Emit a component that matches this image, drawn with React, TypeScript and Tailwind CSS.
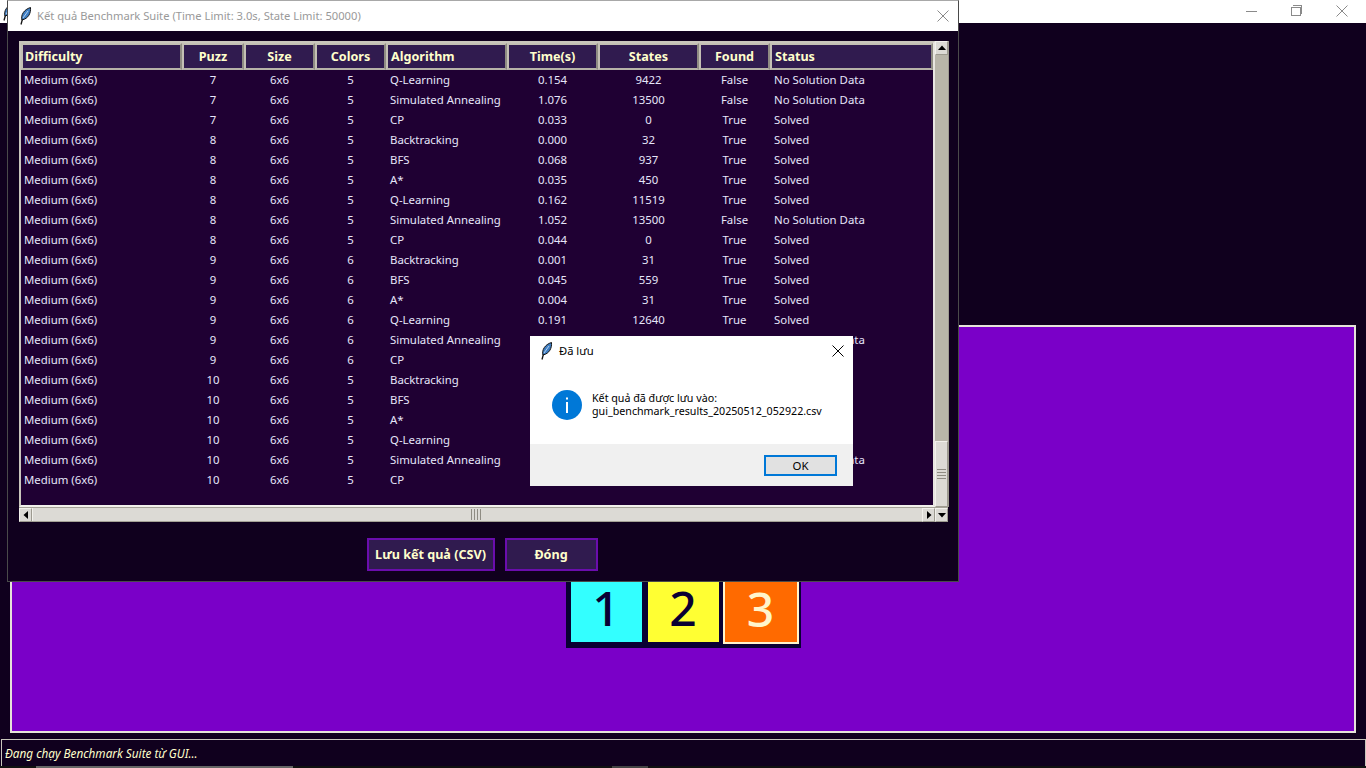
import React from 'react';

// cells the dialog covers in the reference are left empty
const rows = [
  ['7', '5', 'Q-Learning', '0.154', '9422', 'False', 'No Solution Data'],
  ['7', '5', 'Simulated Annealing', '1.076', '13500', 'False', 'No Solution Data'],
  ['7', '5', 'CP', '0.033', '0', 'True', 'Solved'],
  ['8', '5', 'Backtracking', '0.000', '32', 'True', 'Solved'],
  ['8', '5', 'BFS', '0.068', '937', 'True', 'Solved'],
  ['8', '5', 'A*', '0.035', '450', 'True', 'Solved'],
  ['8', '5', 'Q-Learning', '0.162', '11519', 'True', 'Solved'],
  ['8', '5', 'Simulated Annealing', '1.052', '13500', 'False', 'No Solution Data'],
  ['8', '5', 'CP', '0.044', '0', 'True', 'Solved'],
  ['9', '6', 'Backtracking', '0.001', '31', 'True', 'Solved'],
  ['9', '6', 'BFS', '0.045', '559', 'True', 'Solved'],
  ['9', '6', 'A*', '0.004', '31', 'True', 'Solved'],
  ['9', '6', 'Q-Learning', '0.191', '12640', 'True', 'Solved'],
  ['9', '6', 'Simulated Annealing', '', '13500', '', 'No Solution Data'],
  ['9', '6', 'CP', '', '', '', ''],
  ['10', '5', 'Backtracking', '', '', '', ''],
  ['10', '5', 'BFS', '', '', '', ''],
  ['10', '5', 'A*', '', '', '', ''],
  ['10', '5', 'Q-Learning', '', '', '', ''],
  ['10', '5', 'Simulated Annealing', '', '', '', 'No Solution Data'],
  ['10', '5', 'CP', '', '', '', ''],
];

const headers = [
  { name: 'Difficulty', pad: 'justify-start pl-[2px]' },
  { name: 'Puzz', pad: 'justify-center' },
  { name: 'Size', pad: 'justify-center' },
  { name: 'Colors', pad: 'justify-center' },
  { name: 'Algorithm', pad: 'justify-start pl-[3px]' },
  { name: 'Time(s)', pad: 'justify-center' },
  { name: 'States', pad: 'justify-center' },
  { name: 'Found', pad: 'justify-center' },
  { name: 'Status', pad: 'justify-start pl-[3px]' },
];

const Feather = () => {
  return (
    <svg width="16" height="18" viewBox="0 0 16 18" className="shrink-0">
      <path d="M3 17.5 L4.5 12" stroke="#111" strokeWidth="1.3" fill="none" />
      <path d="M4 13 C2.5 8 6 2.5 12.5 0.5 C13 6 10.5 11.5 4 13 Z" fill="#3f7fc4" stroke="#111" strokeWidth="1" />
      <path d="M5 11 L10 4" stroke="#cfe3f7" strokeWidth="0.8" fill="none" />
    </svg>
  );
};

const CloseIcon = (props: any) => {
  return (
    <svg width="12" height="12" viewBox="0 0 12 12">
      <path d="M0.5 0.5 L11.5 11.5 M11.5 0.5 L0.5 11.5" stroke={props.color} strokeWidth="1" fill="none" />
    </svg>
  );
};

const Arrow = (props: any) => {
  const points: any = {
    up: '1,7 9,7 5,2.5',
    down: '1,3 9,3 5,7.5',
    left: '7,1 7,9 2.5,5',
    right: '3,1 3,9 7.5,5',
  };
  return (
    <svg width="10" height="10" viewBox="0 0 10 10">
      <polygon points={points[props.dir]} fill="#000" />
    </svg>
  );
};

const ScrollButton = (props: any) => {
  return (
    <div className="flex h-[14px] w-[13px] shrink-0 items-center justify-center border border-[#f2f1ec] border-r-[#9d9a90] border-b-[#9d9a90] bg-[#dcdad5]">
      <Arrow dir={props.dir} />
    </div>
  );
};

const Tree = () => {
  return (
    <div className="h-[466px] w-[916px] border-2 border-[#c9c6bc] border-r-[#e8e6e0] border-b-[#f2f1ec] bg-[#1f0033]">
      <div className="grid grid-cols-[161px_62px_71px_71px_121px_91px_101px_71px_163px]">
        {headers.map((h) => {
          return (
            <div
              key={h.name}
              className={`flex h-[27px] items-center border-2 border-[#c4c0b5] border-r-[#8f8c83] border-b-[#b6b3a8] bg-[#301b4f] pt-[2px] text-[12.6px] font-bold text-[#ffffcc] ${h.pad}`}
            >
              {h.name}
            </div>
          );
        })}
      </div>
      {rows.map((r, i) => {
        return (
          <div
            key={i}
            className="grid h-5 grid-cols-[161px_62px_71px_71px_121px_91px_101px_71px_163px] items-center text-[11.4px] text-[#e6e6fa]"
          >
            <span className="pl-[3px]">Medium (6x6)</span>
            <span className="text-center">{r[0]}</span>
            <span className="text-center">6x6</span>
            <span className="text-center">{r[1]}</span>
            <span className="pl-[4px]">{r[2]}</span>
            <span className="text-center">{r[3]}</span>
            <span className="text-center">{r[4]}</span>
            <span className="text-center">{r[5]}</span>
            <span className="pl-[4px]">{r[6]}</span>
          </div>
        );
      })}
    </div>
  );
};

const VerticalScroll = () => {
  return (
    <div className="flex h-[466px] w-[14px] flex-col border-r border-[#9d9a90] bg-[#b8b5a9]">
      <ScrollButton dir="up" />
      <div className="flex-1" />
      <div className="flex h-[66px] w-[13px] flex-col items-center justify-center gap-[2px] border border-[#f2f1ec] border-r-[#9d9a90] border-b-[#9d9a90] bg-[#dcdad5]">
        <div className="h-px w-[9px] bg-[#8f8c83]" />
        <div className="h-px w-[9px] bg-[#8f8c83]" />
        <div className="h-px w-[9px] bg-[#8f8c83]" />
        <div className="h-px w-[9px] bg-[#8f8c83]" />
      </div>
    </div>
  );
};

const HorizontalScroll = () => {
  return (
    <div className="flex h-[15px] w-[929px] items-stretch border-t border-b border-[#a5a297] bg-[#dcdad5]">
      <ScrollButton dir="left" />
      <div className="flex flex-1 items-center justify-center gap-[2px] border-l border-[#f2f1ec] pr-[4px]">
        <div className="h-[11px] w-px bg-[#8f8c83]" />
        <div className="h-[11px] w-px bg-[#8f8c83]" />
        <div className="h-[11px] w-px bg-[#8f8c83]" />
        <div className="h-[11px] w-px bg-[#8f8c83]" />
      </div>
      <ScrollButton dir="right" />
      <ScrollButton dir="down" />
    </div>
  );
};

const ResultsWindow = () => {
  return (
    <div className="absolute left-[7px] top-0 flex h-[582px] w-[952px] flex-col border border-[#4a4a4a] border-t-[#a8a8a8] bg-[#10001e]">
      <div className="flex h-[30px] shrink-0 items-center bg-white pl-[10px] pr-[9px]">
        <Feather />
        <span className="ml-[3px] text-[11.2px] text-[#999999]">Kết quả Benchmark Suite (Time Limit: 3.0s, State Limit: 50000)</span>
        <div className="ml-auto">
          <CloseIcon color="#8a8a8a" />
        </div>
      </div>
      <div className="flex flex-col pl-[11px] pt-[10px]">
        <div className="flex">
          <Tree />
          <VerticalScroll />
        </div>
        <HorizontalScroll />
      </div>
      <div className="mt-[16px] flex justify-center gap-[10px] pr-[2px]">
        <button className="h-[33px] w-[128px] border-2 border-[#6a0dad] bg-[#301b4f] pt-[2px] text-[12.6px] font-bold text-[#ffffcc]">Lưu kết quả (CSV)</button>
        <button className="h-[33px] w-[93px] border-2 border-[#6a0dad] bg-[#301b4f] pt-[2px] text-[12.6px] font-bold text-[#ffffcc]">Đóng</button>
      </div>
    </div>
  );
};

const SavedDialog = () => {
  return (
    <div className="absolute left-[530px] top-[336px] flex h-[150px] w-[323px] flex-col bg-white">
      <div className="flex h-[30px] items-center pl-[9px] pr-[9px]">
        <Feather />
        <span className="ml-[4px] text-[11.2px] text-black">Đã lưu</span>
        <div className="ml-auto">
          <CloseIcon color="#000000" />
        </div>
      </div>
      <div className="flex h-[78px] items-start pl-[22px] pt-[24px]">
        <svg width="30" height="30" viewBox="0 0 30 30" className="shrink-0">
          <circle cx="15" cy="15" r="15" fill="#0078d7" />
          <rect x="14" y="12" width="2" height="11" fill="#fff" />
          <rect x="14" y="7.5" width="2" height="2" fill="#fff" />
        </svg>
        <div className="ml-[10px] mt-[2px] text-[10.7px] leading-[13px] text-black">
          <div>Kết quả đã được lưu vào:</div>
          <div>gui_benchmark_results_20250512_052922.csv</div>
        </div>
      </div>
      <div className="flex flex-1 items-center justify-end bg-[#f0f0f0] pr-4 pt-[1px]">
        <button className="h-[21px] w-[73px] border-2 border-[#0078d7] bg-[#e1e1e1] text-[11.4px] text-black">OK</button>
      </div>
    </div>
  );
};

const App = () => {
  return (
    <div className="relative flex h-[768px] w-[1366px] flex-col overflow-hidden bg-[#10001e] font-['Noto_Sans',sans-serif]">
      <div className="flex h-[23px] shrink-0 items-center bg-white pl-[1px]">
        <Feather />
        <div className="ml-auto flex items-center pb-[1px] pr-[18px]">
          <div className="mr-[34px] h-px w-[11px] bg-[#8a8a8a]" />
          <div className="relative mr-[35px] h-[9px] w-[10px] border border-[#8a8a8a]">
            <div className="absolute left-[1px] top-[-3px] h-[9px] w-[9px] border-t border-r border-[#8a8a8a]" />
          </div>
          <CloseIcon color="#8a8a8a" />
        </div>
      </div>
      <div className="flex flex-1 flex-col px-[10px] pb-[6px] pt-[302px]">
        <div className="flex flex-1 justify-center border-2 border-[#e6e3da] bg-[#7a00c8] pl-px pt-[239px]">
          <div className="flex h-[82px] gap-[6px] self-start bg-[#0a0033] p-[5px]">
            <div className="flex h-[71px] w-[71px] items-center justify-center bg-[#33ffff] pr-px pt-[2px] text-[48px] font-medium text-[#0a0033]">1</div>
            <div className="flex h-[71px] w-[71px] items-center justify-center bg-[#ffff33] pr-px pt-[2px] text-[48px] font-medium text-[#0a0033]">2</div>
            <div className="ml-[-2px] mr-[-3px] flex h-[73px] w-[76px] items-center justify-center border-2 border-[#fff5cc] bg-[#ff6a00] pr-px pt-[2px] text-[48px] font-medium text-[#fff5cc]">3</div>
          </div>
        </div>
      </div>
      <div className="ml-px flex h-[27px] shrink-0 items-center border-x border-t border-[#c9c6bc] pl-[3px] pt-[2px] text-[11.75px] italic text-[#ffffcc]">
        Đang chạy Benchmark Suite từ GUI...
      </div>
      <div className="flex h-[2px] shrink-0 bg-[#111111]">
        <div className="ml-[36px] w-[257px] bg-[#666666]" />
        <div className="ml-[319px] w-[36px] bg-[#444444]" />
      </div>
      <ResultsWindow />
      <SavedDialog />
    </div>
  );
};

export default App;
